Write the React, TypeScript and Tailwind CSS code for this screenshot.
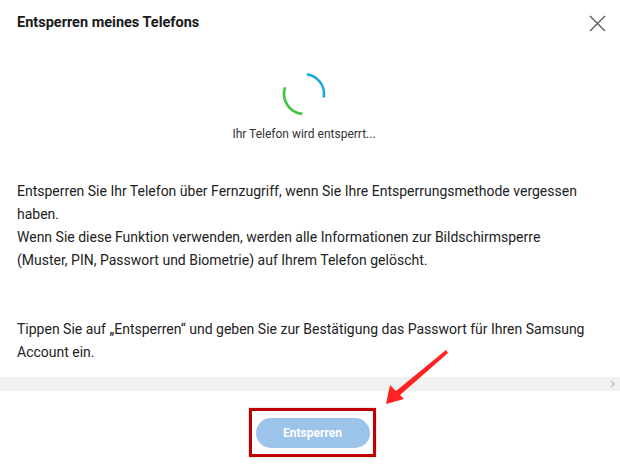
import React from "react";

export default function App() {
  const font = { fontFamily: "Roboto, 'Noto Sans', sans-serif" };
  return (
    <div className="relative w-[620px] h-[464px] bg-white overflow-hidden text-[#252525]" style={font}>
      <div className="flex items-center justify-between pl-[17px] pr-[14px] pt-[13px]">
        <h1 className="text-[14.5px] leading-[20px] font-bold text-[#1a1a1a]">Entsperren meines Telefons</h1>
        <svg width="17" height="17" viewBox="0 0 17 17" className="mt-[1px]">
          <path d="M1 1 L16 16 M16 1 L1 16" stroke="#555" strokeWidth="1.3" fill="none" />
        </svg>
      </div>
      <div className="w-[608px] flex flex-col items-center mt-[39px]">
        <svg width="44" height="44" viewBox="0 0 44 44">
          <path d="M24.8 2.2 A20 20 0 0 1 41.7 25.5" stroke="#1fa8da" strokeWidth="2.6" fill="none" />
          <path d="M20.3 41.9 A20 20 0 0 1 3.2 15.2" stroke="#3fc43f" strokeWidth="2.6" fill="none" />
        </svg>
        <p className="mt-[10px] text-[12px] leading-[16px] text-[#333]">Ihr Telefon wird entsperrt...</p>
      </div>
      <div className="px-[17px] mt-[38px] text-[14px] leading-[23px] text-[#222]">
        <p>
          Entsperren Sie Ihr Telefon über Fernzugriff, wenn Sie Ihre Entsperrungsmethode vergessen
          <br />
          haben.
          <br />
          Wenn Sie diese Funktion verwenden, werden alle Informationen zur Bildschirmsperre
          <br />
          (Muster, PIN, Passwort und Biometrie) auf Ihrem Telefon gelöscht.
        </p>
        <p className="mt-[46px]">
          Tippen Sie auf „Entsperren“ und geben Sie zur Bestätigung das Passwort für Ihren Samsung
          <br />
          Account ein.
        </p>
      </div>
      <div className="mt-[13px] h-[14px] bg-[#f1f1f1] flex items-center justify-end pr-[5px]">
        <svg width="5" height="8" viewBox="0 0 5 8">
          <path d="M1 1 L4 4 L1 7" stroke="#bdbdbd" strokeWidth="1.2" fill="none" />
        </svg>
      </div>
      <div className="flex justify-center mt-[17px]">
        <div className="ml-[5px] w-[127px] h-[49px] border-[3px] border-[#c00000] flex items-center justify-center shadow-[0_0_2px_rgba(0,0,0,0.25)]">
          <button className="w-[114px] h-[30px] rounded-full bg-[#9cc3ea] text-white text-[12px] font-bold">
            Entsperren
          </button>
        </div>
      </div>
      <svg className="absolute left-0 top-0 pointer-events-none" width="620" height="464" viewBox="0 0 620 464">
        <polygon points="386,404 390,385 396,391 446,350 448,353 400,395 404,399" fill="#f22" />
      </svg>
    </div>
  );
}
